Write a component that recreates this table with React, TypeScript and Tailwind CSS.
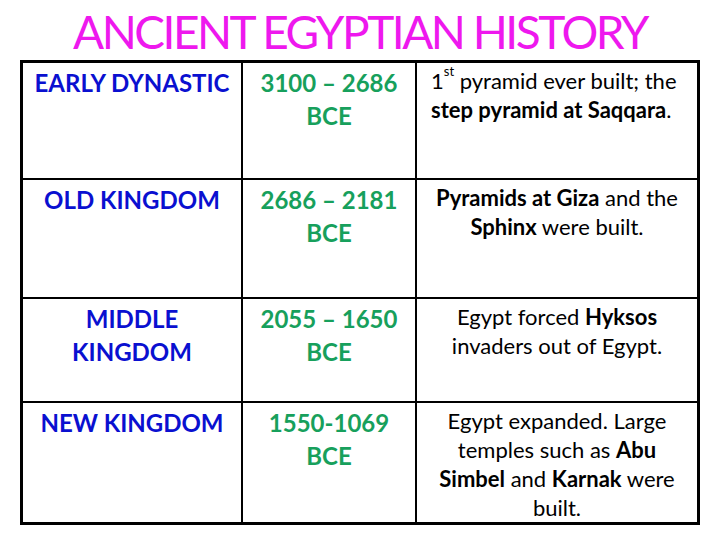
const rows = [
  {
    era: ["EARLY DYNASTIC"],
    dates: ["3100 – 2686", "BCE"],
    h: "h-[117px]",
    left: true,
    note: (
      <>
        1<sup className="text-[13px] align-[7px]">st</sup> pyramid ever built; the{" "}
        <b>step pyramid at Saqqara</b>.
      </>
    ),
  },
  {
    era: ["OLD KINGDOM"],
    dates: ["2686 – 2181", "BCE"],
    h: "h-[119px]",
    note: (
      <>
        <b>Pyramids at Giza</b> and the <b>Sphinx</b> were built.
      </>
    ),
  },
  {
    era: ["MIDDLE", "KINGDOM"],
    dates: ["2055 – 1650", "BCE"],
    h: "h-[104px]",
    note: (
      <>
        Egypt forced <b>Hyksos</b> invaders out of Egypt.
      </>
    ),
  },
  {
    era: ["NEW KINGDOM"],
    dates: ["1550-1069", "BCE"],
    h: "h-[119px]",
    last: true,
    note: (
      <>
        Egypt expanded. Large temples such as <b>Abu Simbel</b> and <b>Karnak</b> were built.
      </>
    ),
  },
];

export default function App() {
  return (
    <div className="w-[720px] h-[540px] bg-white font-['Lato',sans-serif] text-black">
      {/* Title */}
      <div className="h-[60px] flex items-center justify-center pt-[3px]">
        <h1 className="text-[46px] leading-none text-[#ee18ee] tracking-[-2.5px]">
          ANCIENT EGYPTIAN HISTORY
        </h1>
      </div>

      {/* Table */}
      <div className="ml-[20px] w-[680px] border-[3px] border-black">
        {rows.map((r, i) => (
          <div
            key={i}
            className={`flex ${r.h} ${r.last ? "" : "border-b-2 border-black"}`}
          >
            <div className="w-[220px] border-r-2 border-black pt-[3px] text-center font-bold text-[24px] leading-[33px] text-[#0a10d0]">
              {r.era.map((l) => (
                <div key={l}>{l}</div>
              ))}
            </div>
            <div className="w-[174px] border-r-2 border-black pt-[3px] text-center font-bold text-[24px] leading-[33px] text-[#17a05c]">
              {r.dates.map((l) => (
                <div key={l}>{l}</div>
              ))}
            </div>
            <div
              className={`w-[280px] pt-[3px] text-[22px] leading-[29px] ${
                r.left ? "text-left pl-[14px] pr-[4px]" : "text-center px-[12px]"
              }`}
            >
              {r.note}
            </div>
          </div>
        ))}
      </div>
    </div>
  );
}
